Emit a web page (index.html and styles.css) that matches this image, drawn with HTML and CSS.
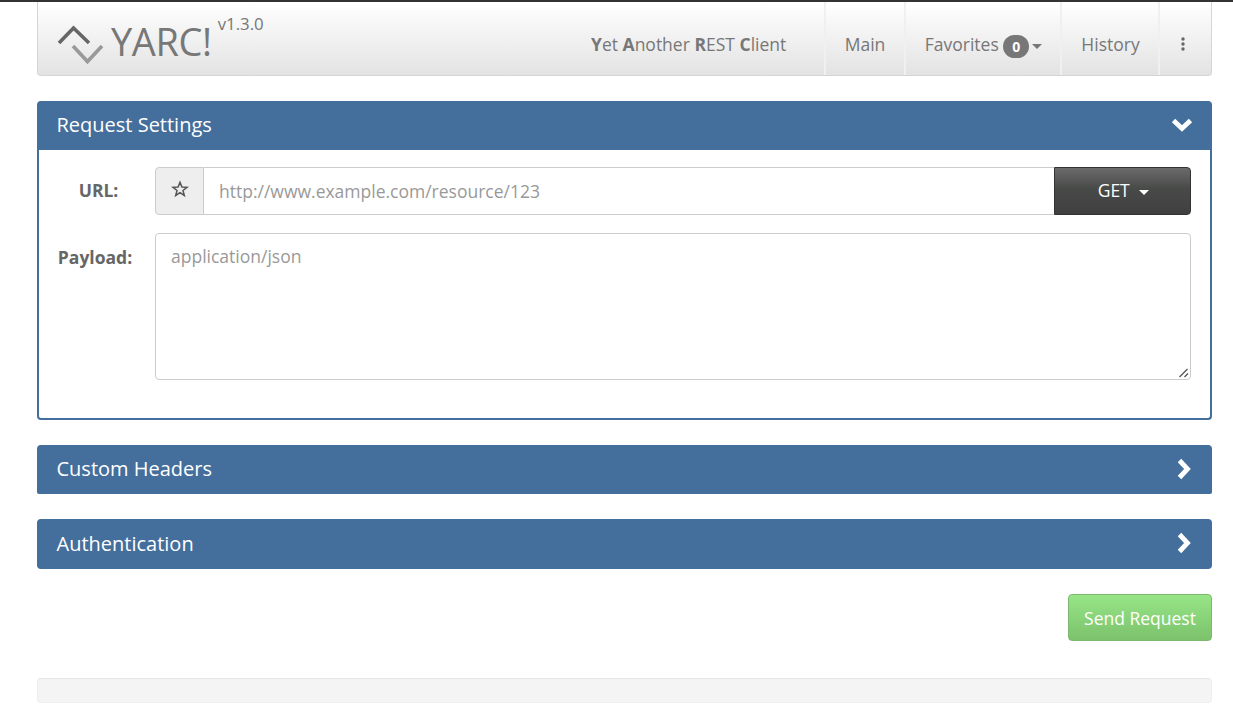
FILE: index.html
```html
<!DOCTYPE html>
<html lang="en">
<head>
<meta charset="utf-8">
<title>YARC!</title>
<link rel="stylesheet" href="styles.css">
</head>
<body>
<div class="page">
  <header class="navbar">
    <div class="brand">
      <svg class="logo" width="48" height="44" viewBox="0 0 48 44" aria-hidden="true">
        <path d="M3 20 L17.500 5 L33 20" fill="none" stroke="#666" stroke-width="3.600"/>
        <path d="M17 23 L31.500 38.500 L46 23" fill="none" stroke="#999" stroke-width="3.600"/>
      </svg>
      <span class="brand-name">YARC!</span>
      <span class="version">v1.3.0</span>
    </div>
    <div class="tagline"><b>Y</b>et <b>A</b>nother <b>R</b>EST <b>C</b>lient</div>
    <nav class="nav">
      <a class="nav-item nav-main">Main</a>
      <a class="nav-item nav-fav">Favorites <span class="badge">0</span><span class="caret caret-nav"></span></a>
      <a class="nav-item nav-hist">History</a>
      <a class="nav-item nav-more"><svg width="6" height="14" viewBox="0 0 6 14" aria-hidden="true"><circle cx="3" cy="2" r="1.700"/><circle cx="3" cy="7" r="1.700"/><circle cx="3" cy="12" r="1.700"/></svg></a>
    </nav>
  </header>

  <section class="panel panel-open">
    <div class="panel-heading">
      <span>Request Settings</span>
      <svg class="chev-down" width="22" height="16" viewBox="0 0 22 16" aria-hidden="true"><path d="M2.500 3.500 L11 11.500 L19.500 3.500" fill="none" stroke="#fff" stroke-width="4.800"/></svg>
    </div>
    <div class="panel-body">
      <div class="form-row">
        <label class="label label-url">URL:</label>
        <div class="input-group">
          <span class="addon"><svg class="star" width="18" height="18" viewBox="0 0 18 18" aria-hidden="true"><path d="M9 2.200 L10.900 7 L16 7.300 L12 10.500 L13.300 15.500 L9 12.700 L4.700 15.500 L6 10.500 L2 7.300 L7.100 7 Z" fill="none" stroke="#555" stroke-width="1.500"/></svg></span>
          <input class="url-input" type="text" placeholder="http://www.example.com/resource/123">
          <button class="method" type="button">GET <span class="caret caret-get"></span></button>
        </div>
      </div>
      <div class="form-row form-row-payload">
        <label class="label label-payload">Payload:</label>
        <div class="payload-wrap">
          <textarea class="payload" placeholder="application/json"></textarea>
          <svg class="grip" width="10" height="10" viewBox="0 0 10 10" aria-hidden="true"><path d="M0.500 9 L8.500 1 M5.500 9 L9 5.500" fill="none" stroke="#555" stroke-width="1.300"/></svg>
        </div>
      </div>
    </div>
  </section>

  <section class="panel panel-headers">
    <div class="panel-heading">
      <span>Custom Headers</span>
      <svg class="chev-right" width="16" height="22" viewBox="0 0 16 22" aria-hidden="true"><path d="M3.500 2.500 L11.500 11 L3.500 19.500" fill="none" stroke="#fff" stroke-width="4.800"/></svg>
    </div>
  </section>

  <section class="panel panel-auth">
    <div class="panel-heading">
      <span>Authentication</span>
      <svg class="chev-right" width="16" height="22" viewBox="0 0 16 22" aria-hidden="true"><path d="M3.500 2.500 L11.500 11 L3.500 19.500" fill="none" stroke="#fff" stroke-width="4.800"/></svg>
    </div>
  </section>

  <div class="actions">
    <button class="send" type="button">Send Request</button>
  </div>

  <div class="well"></div>
</div>
</body>
</html>
```
FILE: styles.css
```css
* { box-sizing: border-box; }
html, body { margin: 0; padding: 0; }
body {
  background: #fff;
  border-top: 2px solid #333;
  font-family: "Open Sans", "Liberation Sans", sans-serif;
  font-size: 17.5px;
  color: #666;
  overflow: hidden;
  height: 721px;
}
.page { padding: 0 21px 0 37px; }

.navbar {
  display: flex;
  align-items: stretch;
  height: 74px;
  margin-bottom: 25px;
  border: 1px solid #d5d5d5;
  border-top: 0;
  border-radius: 0 0 4px 4px;
  background: linear-gradient(#fff, #e3e3e3);
  color: #777;
}
.brand { display: flex; align-items: flex-start; width: 530px; padding-left: 18px; }
.logo { margin-top: 21px; flex: none; }
.brand-name {
  margin: 13px 0 0 7px;
  font-size: 38px;
  line-height: 52px;
  letter-spacing: -0.4px;
}
.version { margin: 11px 0 0 6px; font-size: 16.800px; line-height: 22px; }
.tagline {
  width: 233px;
  padding-top: 30px;
  line-height: 24px;
  white-space: nowrap;
  margin-left: 23px;
}
.nav { display: flex; flex: 1; }
.nav-item {
  padding: 30px 0 0;
  line-height: 24px;
  white-space: nowrap;
  border-left: 2px solid #f0f0f0;
  text-align: center;
}
.nav-main { width: 80px; }
.nav-fav { width: 156px; padding-left: 1px; }
.nav-hist { width: 98px; padding-left: 1px; }
.nav-more { flex: 1; padding-right: 5px; }
.nav-more svg { fill: #666; display: block; margin: 5px auto 0; }
.badge {
  display: inline-block;
  min-width: 26px;
  height: 23px;
  border-radius: 12px;
  background: #777;
  color: #fff;
  font-size: 14px;
  font-weight: 700;
  line-height: 23px;
  text-align: center;
  vertical-align: -1px;
}
.caret {
  display: inline-block;
  width: 0;
  height: 0;
  border-left: 5px solid transparent;
  border-right: 5px solid transparent;
  border-top: 5px solid #777;
  vertical-align: middle;
}
.caret-nav { margin-left: 3px; }
.caret-get { border-top-color: #fff; margin-left: 5px; }

.panel { border-radius: 4px; margin-bottom: 25px; }
.panel-heading {
  display: flex;
  justify-content: space-between;
  align-items: center;
  height: 49px;
  padding: 0 20px 2px 19.500px;
  background: #446e9b;
  color: #fff;
  font-size: 20px;
  border-radius: 4px 4px 0 0;
}
.panel-headers .panel-heading { border-radius: 4px 4px 2px 2px; }
.panel-auth .panel-heading { height: 50px; border-radius: 4px; padding-bottom: 2px; }
.panel-open .chev-down { margin-right: -1px; }
.panel-body {
  height: 270px;
  padding: 17px 19px 0 0;
  border: 2px solid #446e9b;
  border-top: 0;
  border-radius: 0 0 4px 4px;
}
.form-row { display: flex; align-items: center; }
.form-row-payload { align-items: flex-start; margin-top: 18px; }
.label { width: 116px; flex: none; font-weight: 700; color: #666; text-align: center; }
.label-url { padding: 0 0 2px 3px; }
.label-payload { padding: 12px 4px 0 0; line-height: 24px; }

.input-group { display: flex; flex: 1; height: 48px; }
.addon {
  display: flex;
  align-items: center;
  justify-content: center;
  width: 49px;
  flex: none;
  background: #eee;
  border: 1px solid #ccc;
  border-radius: 4px 0 0 4px;
}
.star { margin-bottom: 4px; }
.url-input {
  flex: 1;
  min-width: 0;
  padding: 0 15px 1px;
  border: 1px solid #ccc;
  border-left: 0;
  border-right: 0;
  outline: 0;
  font: inherit;
  color: #666;
}
.url-input::placeholder, .payload::placeholder { color: #999; opacity: 1; }
.method {
  width: 137px;
  flex: none;
  padding: 0 4px 2px 6px;
  border: 1px solid #333;
  border-radius: 0 4px 4px 0;
  background: linear-gradient(#6a6a6a, #484a48 45%, #3f3f3f);
  color: #fff;
  font: inherit;
}
.payload-wrap { position: relative; flex: 1; height: 147px; }
.payload {
  display: block;
  width: 100%;
  height: 147px;
  padding: 10px 15px;
  border: 1px solid #ccc;
  border-radius: 4px;
  outline: 0;
  font: inherit;
  color: #666;
  resize: none;
}
.grip { position: absolute; right: 2px; bottom: 2px; }

.actions { display: flex; justify-content: flex-end; margin-bottom: 37px; }
.send {
  width: 144px;
  height: 47px;
  border: 1px solid #7db870;
  border-radius: 4px;
  background: linear-gradient(#97e586, #7cc26c);
  color: #fff;
  font: inherit;
}
.well {
  height: 25px;
  background: #f4f4f4;
  border: 1px solid #eee;
  border-top-color: #e6e6e6;
  border-radius: 4px;
}
```
